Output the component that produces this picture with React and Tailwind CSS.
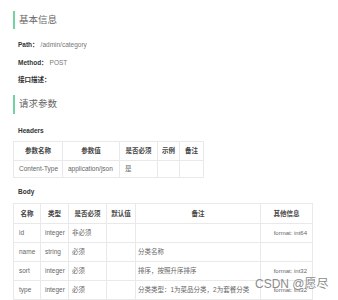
const font = { fontFamily: '"Liberation Sans", "Noto Sans CJK SC", sans-serif' };

function SectionTitle({ children, className = '' }) {
  return (
    <div className={`flex items-center h-[18px] border-l-2 border-[#72d3a0] pl-[4px] text-[9.5px] text-[#666] ${className}`}>
      {children}
    </div>
  );
}

function Field({ label, value, className = '' }) {
  return (
    <div className={`flex items-center h-[12px] pl-[5px] text-[6.5px] ${className}`}>
      <span className="font-bold text-[#333]">{label}</span>
      {value && <span className="ml-[2px] text-[#777]">{value}</span>}
    </div>
  );
}

const th = 'border border-[#e9e9e9] font-bold text-[#444] text-center';
const td = 'border border-[#e9e9e9] text-[#666] text-left pl-[5px]';

const headers = [
  { name: 'Content-Type', value: 'application/json', req: '是' },
];

const body = [
  { name: 'id', type: 'integer', req: '非必须', note: '', extra: 'format: int64' },
  { name: 'name', type: 'string', req: '必须', note: '分类名称', extra: '' },
  { name: 'sort', type: 'integer', req: '必须', note: '排序，按照升序排序', extra: 'format: int32' },
  { name: 'type', type: 'integer', req: '必须', note: '分类类型：1为菜品分类，2为套餐分类', extra: 'format: int32' },
];

export default function App() {
  return (
    <div className="relative w-[338px] h-[300px] overflow-hidden bg-white pl-[13px] pt-[11px]" style={font}>
      <SectionTitle>基本信息</SectionTitle>
      <Field label="Path：" value="/admin/category" className="mt-[10px]" />
      <Field label="Method：" value="POST" className="mt-[6px]" />
      <Field label="接口描述：" className="mt-[5px]" />

      <SectionTitle className="mt-[9px] h-[19px]">请求参数</SectionTitle>
      <Field label="Headers" className="mt-[11px]" />

      <table className="mt-[4px] border-collapse text-[6.5px] table-fixed w-[190px]">
        <colgroup>
          <col className="w-[49px]" />
          <col className="w-[57px]" />
          <col className="w-[38px]" />
          <col className="w-[22px]" />
          <col className="w-[24px]" />
        </colgroup>
        <thead>
          <tr className="h-[19px]">
            <th className={th}>参数名称</th>
            <th className={th}>参数值</th>
            <th className={th}>是否必须</th>
            <th className={th}>示例</th>
            <th className={th}>备注</th>
          </tr>
        </thead>
        <tbody>
          {headers.map((h) => (
            <tr key={h.name} className="h-[17px]">
              <td className={td}>{h.name}</td>
              <td className={td}>{h.value}</td>
              <td className={td}>{h.req}</td>
              <td className={td}></td>
              <td className={td}></td>
            </tr>
          ))}
        </tbody>
      </table>

      <Field label="Body" className="mt-[8px]" />

      <table className="mt-[5px] border-collapse text-[6.5px] table-fixed w-[299px]">
        <colgroup>
          <col className="w-[27px]" />
          <col className="w-[28px]" />
          <col className="w-[38px]" />
          <col className="w-[29px]" />
          <col className="w-[125px]" />
          <col className="w-[52px]" />
        </colgroup>
        <thead>
          <tr className="h-[20px]">
            <th className={th}>名称</th>
            <th className={th}>类型</th>
            <th className={th}>是否必须</th>
            <th className={th}>默认值</th>
            <th className={th}>备注</th>
            <th className={th}>其他信息</th>
          </tr>
        </thead>
        <tbody>
          {body.map((r) => (
            <tr key={r.name} className="h-[19px]">
              <td className={td}>{r.name}</td>
              <td className={`${td} !pl-[4px]`}>{r.type}</td>
              <td className={`${td} !pl-[3px]`}>{r.req}</td>
              <td className={td}></td>
              <td className={`${td} !pl-[2px] whitespace-nowrap`}>{r.note}</td>
              <td className={`${td} text-right pr-[5px] text-[6px]`}>{r.extra}</td>
            </tr>
          ))}
        </tbody>
      </table>

      <div className="absolute left-[255px] top-[275px] text-[12px] text-[#8c8c8c] whitespace-nowrap">
        CSDN @愿尽
      </div>
    </div>
  );
}
